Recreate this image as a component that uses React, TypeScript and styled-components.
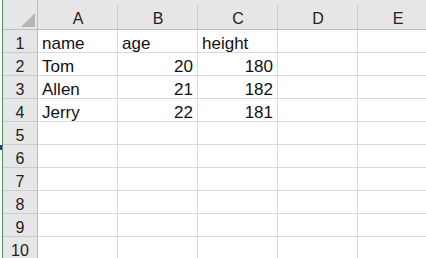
import React from "react";
import styled, { createGlobalStyle } from "styled-components";

const Global = createGlobalStyle`
  html, body { margin: 0; padding: 0; background: #fff; overflow: hidden; }
  body { width: 426px; height: 258px; }
`;

const Page = styled.div`
  position: relative;
  display: flex;
  width: 426px;
  height: 258px;
  overflow: hidden;
  background: #fff;
  font-family: "Liberation Sans", Arial, sans-serif;
`;

const Gutter = styled.div`
  flex: 0 0 2px;
  background: #fafafa;
`;

const GreenEdge = styled.div`
  flex: 0 0 1px;
  background: #4f8a62;
`;

const CursorMark = styled.span`
  position: absolute;
  left: 0;
  top: 145px;
  width: 2px;
  height: 5px;
  background: #1d3f7a;
`;

const Sheet = styled.div`
  display: grid;
  grid-template-columns: 35px repeat(5, 80px);
  grid-template-rows: 30px;
  grid-auto-rows: 23px;
  flex: 0 0 auto;
`;

const Cell = styled.div<{ $align?: "left" | "right" }>`
  box-sizing: border-box;
  display: flex;
  align-items: flex-end;
  justify-content: ${(p) => (p.$align === "right" ? "flex-end" : "flex-start")};
  padding: 0 ${(p) => (p.$align === "right" ? "4px" : "0")} 0
    ${(p) => (p.$align === "right" ? "0" : "4px")};
  border-right: 1px solid #dadada;
  border-bottom: 1px solid #dadada;
  font-size: 17px;
  line-height: 17px;
  color: #111;
  white-space: nowrap;
  overflow: hidden;
`;

const Corner = styled.div`
  box-sizing: border-box;
  display: flex;
  align-items: flex-end;
  justify-content: flex-end;
  padding: 0 2px 2px 0;
  background: #e6e6e6;
  border-right: 1px solid #bcbcbc;
  border-bottom: 1px solid #bcbcbc;
`;

const ColHeader = styled.div`
  position: relative;
  box-sizing: border-box;
  display: flex;
  align-items: flex-end;
  justify-content: center;
  background: #e6e6e6;
  border-bottom: 1px solid #bcbcbc;
  font-size: 16px;
  line-height: 16px;
  padding-bottom: 2px;
  color: #222;
  &::after {
    content: "";
    position: absolute;
    right: 0;
    top: 5px;
    bottom: 0;
    width: 1px;
    background: #cdcdcd;
  }
`;

const RowHeader = styled.div`
  box-sizing: border-box;
  display: flex;
  align-items: flex-end;
  justify-content: center;
  background: #e6e6e6;
  border-right: 1px solid #bcbcbc;
  border-bottom: 1px solid #cbcbcb;
  font-size: 16px;
  line-height: 17px;
  color: #222;
`;

const cols = ["A", "B", "C", "D", "E"];

const rows: (string | number | null)[][] = [
  ["name", "age", "height", null, null],
  ["Tom", 20, 180, null, null],
  ["Allen", 21, 182, null, null],
  ["Jerry", 22, 181, null, null],
  [null, null, null, null, null],
  [null, null, null, null, null],
  [null, null, null, null, null],
  [null, null, null, null, null],
  [null, null, null, null, null],
  [null, null, null, null, null],
];

export default function App() {
  return (
    <>
      <Global />
      <Page>
        <Gutter />
        <GreenEdge />
        <CursorMark />
        <Sheet>
          <Corner>
            <svg width="14" height="14" viewBox="0 0 14 14">
              <polygon points="14,0 14,14 0,14" fill="#b6b6b6" />
            </svg>
          </Corner>
          {cols.map((c) => (
            <ColHeader key={c}>{c}</ColHeader>
          ))}
          {rows.map((r, i) => (
            <React.Fragment key={i}>
              <RowHeader>{i + 1}</RowHeader>
              {r.map((v, j) => (
                <Cell key={j} $align={typeof v === "number" ? "right" : "left"}>
                  {v ?? ""}
                </Cell>
              ))}
            </React.Fragment>
          ))}
        </Sheet>
      </Page>
    </>
  );
}
